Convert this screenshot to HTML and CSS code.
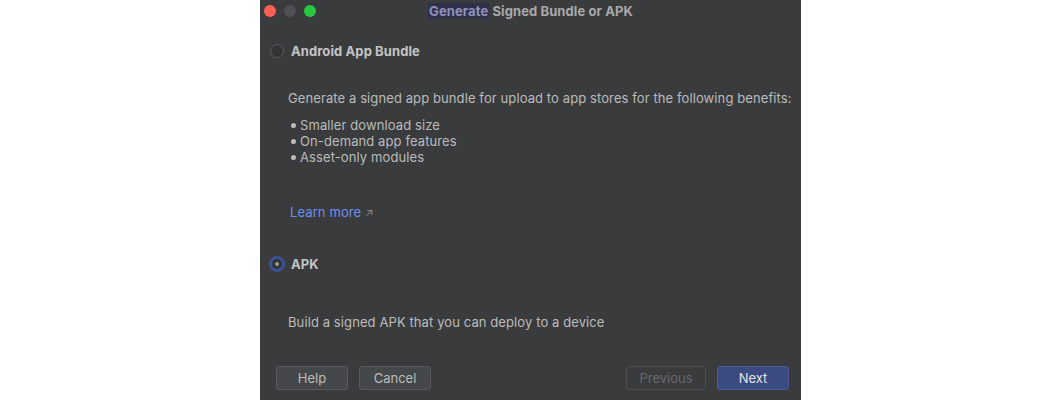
FILE: index.html
```html
<!DOCTYPE html>
<html lang="en">
<head>
  <meta charset="UTF-8" />
  <meta name="viewport" content="width=device-width, initial-scale=1.0"/>
  <title>Generate Signed Bundle or APK</title>
  <link rel="stylesheet" href="styles.css">
</head>
<body>

  <div class="window">
    <div class="titlebar">
      <div class="lights">
        <span class="light red"></span>
        <span class="light gray"></span>
        <span class="light green"></span>
      </div>
      <div class="title"><span class="hl">Generate</span> Signed Bundle or APK</div>
      <div></div>
    </div>

    <div class="content">
      <label class="option">
        <span class="radio"></span>
        <span class="option-label">Android App Bundle</span>
      </label>

      <p class="desc first">Generate a signed app bundle for upload to app stores for the following benefits:</p>
      <ul class="benefits">
        <li>Smaller download size</li>
        <li>On-demand app features</li>
        <li>Asset-only modules</li>
      </ul>

      <a class="learn" href="#">Learn more <span class="arrow">↗</span></a>

      <label class="option apk">
        <span class="radio checked"></span>
        <span class="option-label">APK</span>
      </label>

      <p class="desc second">Build a signed APK that you can deploy to a device</p>
    </div>

    <div class="footer">
      <div class="group">
        <button class="btn">Help</button>
        <button class="btn">Cancel</button>
      </div>
      <div class="group">
        <button class="btn wide disabled">Previous</button>
        <button class="btn primary">Next</button>
      </div>
    </div>
  </div>

</body>
</html>
```

FILE: styles.css
```css
* {
  box-sizing: border-box;
}

body {
  margin: 0;
  padding: 0;
  background: #ffffff;
  font-family: Inter, 'Liberation Sans', sans-serif;
  font-size: 13px;
  letter-spacing: 0.1px;
  color: #bbbbbb;
}

.window {
  margin-left: 260px;
  width: 541px;
  height: 400px;
  background: #3a3b3d;
  display: flex;
  flex-direction: column;
}

.titlebar {
  height: 22px;
  display: grid;
  grid-template-columns: 1fr auto 1fr;
  align-items: center;
}

.lights {
  display: flex;
  gap: 8px;
  padding-left: 4px;
}

.light {
  width: 12px;
  height: 12px;
  border-radius: 50%;
}

.red { background: #fe5f57; }
.gray { background: #4e4f52; }
.green { background: #28c840; }

.title {
  font-weight: 700;
  color: #a9a9a9;
  line-height: 16px;
}

.hl {
  background: #2f3149;
  color: #8f91bd;
  padding: 0 1px;
}

.content {
  display: flex;
  flex-direction: column;
  align-items: flex-start;
}

.option {
  display: flex;
  align-items: center;
  gap: 7px;
  height: 18px;
  margin-top: 20px;
  padding-left: 10px;
  font-weight: 700;
  color: #c4c4c4;
}

.radio {
  width: 14px;
  height: 14px;
  border-radius: 50%;
  border: 1px solid #5b5d60;
  background: #313335;
}

.radio.checked {
  width: 16px;
  height: 16px;
  margin-left: -1px;
  margin-right: -1px;
  border: 3px solid #3b5393;
  background: #2f3133;
  display: flex;
  align-items: center;
  justify-content: center;
}

.radio.checked::after {
  content: '';
  width: 4px;
  height: 4px;
  border-radius: 50%;
  background: #9c9c9c;
}

.desc {
  margin: 0;
  padding-left: 28px;
  line-height: 16px;
}

.desc.first {
  margin-top: 30px;
}

.benefits {
  margin: 11px 0 0;
  padding-left: 40px;
  line-height: 16px;
  list-style: none;
}

.benefits li {
  position: relative;
}

.benefits li::before {
  content: '';
  position: absolute;
  left: -9px;
  top: 6px;
  width: 5px;
  height: 5px;
  border-radius: 50%;
  background: #bbbbbb;
}

.learn {
  margin-top: 39px;
  margin-left: 30px;
  line-height: 16px;
  color: #6e8ef0;
  text-decoration: none;
}

.arrow {
  color: #8a8a8a;
  font-size: 11px;
}

.option.apk {
  margin-top: 34px;
}

.desc.second {
  margin-top: 41px;
}

.footer {
  margin-top: auto;
  display: flex;
  justify-content: space-between;
  padding: 0 12px 10px 16px;
}

.group {
  display: flex;
  gap: 11px;
}

.btn {
  width: 72px;
  height: 24px;
  font-family: inherit;
  font-size: 13px;
  color: #bbbbbb;
  background: #45484a;
  border: 1px solid #585b5d;
  border-radius: 3px;
  padding: 0;
}

.btn.wide {
  width: 80px;
}

.btn.disabled {
  background: transparent;
  border-color: #4c4e50;
  color: #67696b;
}

.btn.primary {
  background: #3b4a80;
  border-color: #4a5a98;
  color: #e4e4e4;
}
```
